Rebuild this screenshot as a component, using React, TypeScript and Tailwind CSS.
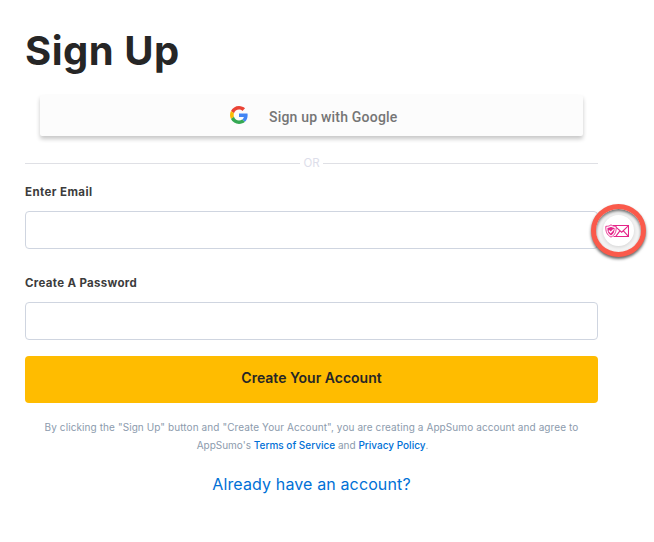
import React from "react";

function GoogleLogo() {
  return (
    <svg viewBox="0 0 48 48" className="mb-[1px] h-[18px] w-[18px] shrink-0" aria-hidden="true">
      <path fill="#EA4335" d="M24 9.5c3.54 0 6.71 1.22 9.21 3.6l6.85-6.85C35.9 2.38 30.47 0 24 0 14.62 0 6.51 5.38 2.56 13.22l7.98 6.19C12.43 13.72 17.74 9.5 24 9.5z" />
      <path fill="#4285F4" d="M46.98 24.55c0-1.57-.15-3.09-.38-4.55H24v9.02h12.94c-.58 2.96-2.26 5.48-4.78 7.18l7.73 6c4.51-4.18 7.09-10.36 7.09-17.65z" />
      <path fill="#FBBC05" d="M10.53 28.59c-.48-1.45-.76-2.99-.76-4.59s.27-3.14.76-4.59l-7.98-6.19C.92 16.46 0 20.12 0 24c0 3.88.92 7.54 2.56 10.78l7.97-6.19z" />
      <path fill="#34A853" d="M24 48c6.48 0 11.93-2.13 15.89-5.81l-7.73-6c-2.15 1.45-4.92 2.3-8.16 2.3-6.26 0-11.57-4.22-13.47-9.91l-7.98 6.19C6.51 42.62 14.62 48 24 48z" />
    </svg>
  );
}

function MailShieldBadge() {
  return (
    <div className="absolute -right-[48px] -top-[7px] flex h-[53px] w-[55px] items-center justify-center rounded-[50%] border-[5px] border-[#fa5a4b] bg-[#f5f5f5] shadow-[0_2px_3px_rgba(0,0,0,0.6),inset_0_2px_3px_rgba(0,0,0,0.55)]">
      <div className="flex h-[31px] w-[31px] items-center justify-center rounded-full bg-white pr-[3px] shadow-[0_1px_4px_rgba(0,0,0,0.15)]">
        <svg viewBox="0 0 24 14" className="h-[14px] w-[24px] shrink-0" fill="none" stroke="#e52589" aria-hidden="true">
          <path strokeWidth="1.1" d="M8 1.5H23.5V12.5H8.5" />
          <path strokeWidth="1.1" d="M9.5 1.8l7.2 6.4 6.6-6.4M11 12.2l3.9-5.3M23.2 12.2l-4.8-5.3" />
          <path fill="white" strokeWidth="0.9" d="M6 .8C4.7 2 2.9 2.3.8 2.3c-.2 5 .9 8.6 5.2 10.8 4.3-2.2 5.4-5.8 5.2-10.8C9.1 2.3 7.3 2 6 .8z" />
          <path fill="#e52589" stroke="none" d="M6 2.8c-1.1.7-2.1 1-3.6 1.1 0 3.5.8 5.8 3.6 7.5 2.8-1.7 3.6-4 3.6-7.5C8.1 3.8 7.1 3.5 6 2.8z" />
          <path stroke="white" strokeWidth="1.2" d="M3.8 6.5l1.9 2 2.9-3.2" />
        </svg>
      </div>
    </div>
  );
}

export default function App() {
  return (
    <main className="h-[542px] w-[654px] overflow-hidden bg-white pl-[25px] font-['Inter',sans-serif]">
      <div className="flex w-[573px] flex-col">
        <h1 className="mt-[26px] h-[50px] whitespace-nowrap text-[40px] font-bold leading-[50px] tracking-[0.5px] text-[#262626]">Sign Up</h1>
        <button className="ml-[15px] mt-[19px] flex h-[41px] w-[543px] items-center rounded-[2px] bg-[#fcfcfc] pl-[190px] shadow-[0_3px_4px_rgba(0,0,0,0.22)]">
          <GoogleLogo />
          <span className="ml-[21px] mt-[3px] whitespace-nowrap font-['Roboto',sans-serif] text-[14px] font-medium leading-[20px] tracking-[0.2px] text-[#757575]">Sign up with Google</span>
        </button>
        <div className="mt-[19px] flex h-[16px] items-center">
          <div className="h-px flex-1 bg-[#dfe0e5]" />
          <span className="w-[23px] text-center text-[11.5px] leading-[16px] text-[#dddeea]">OR</span>
          <div className="h-px flex-1 bg-[#dfe0e5]" />
        </div>
        <label htmlFor="email" className="mt-[13px] h-[16px] w-fit whitespace-nowrap text-[11.5px] font-bold leading-[16px] tracking-[0.42px] text-[#3c3c3c]">Enter Email</label>
        <div className="relative mt-[11px] h-[38px]">
          <input id="email" type="email" className="block h-[38px] w-full rounded-[4px] border border-[#cfd5e0] bg-white px-3 outline-none" />
          <MailShieldBadge />
        </div>
        <label htmlFor="password" className="mt-[26px] h-[16px] w-fit whitespace-nowrap text-[11.5px] font-bold leading-[16px] tracking-[0.32px] text-[#3c3c3c]">Create A Password</label>
        <input id="password" type="password" className="mt-[11px] block h-[38px] w-full rounded-[4px] border border-[#cfd5e0] bg-white px-3 outline-none" />
        <button className="mt-[16px] h-[47px] rounded-[4px] bg-[#ffbc00] pb-[3px] text-[14px] font-semibold leading-[20px] text-[#262626]">
          <span>Create Your Account</span>
        </button>
        <p className="mt-[15px] whitespace-nowrap text-center text-[10px] leading-[18px] text-[#8c9bad]">
          <span className="tracking-[0.09px]">By clicking the "Sign Up" button and "Create Your Account", you are creating a AppSumo account and agree to</span>
          <br />
          <span className="pl-[2px]">AppSumo's <a className="font-medium text-[#0070d6]">Terms of Service</a> and <a className="font-medium text-[#0070d6]">Privacy Policy</a>.</span>
        </p>
        <a className="mt-[18px] whitespace-nowrap text-center text-[16px] leading-[24px] tracking-[0.13px] text-[#0070d6]">Already have an account?</a>
      </div>
    </main>
  );
}
